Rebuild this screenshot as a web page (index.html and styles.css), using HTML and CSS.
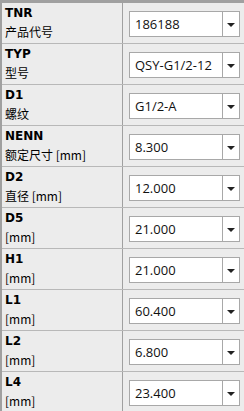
FILE: index.html
```html
<!DOCTYPE html>
<html lang="zh">
<head>
  <meta charset="UTF-8" />
  <meta name="viewport" content="width=device-width, initial-scale=1.0"/>
  <title>Parameter</title>
  <link rel="stylesheet" href="styles.css">
</head>
<body>
  <div class="table">
    <div class="row">
      <div class="label"><b>TNR</b><span>产品代号</span></div>
      <div class="value"><div class="combo"><span class="text">186188</span><span class="arrow"></span></div></div>
    </div>
    <div class="row">
      <div class="label"><b>TYP</b><span>型号</span></div>
      <div class="value"><div class="combo"><span class="text">QSY-G1/2-12</span><span class="arrow"></span></div></div>
    </div>
    <div class="row">
      <div class="label"><b>D1</b><span>螺纹</span></div>
      <div class="value"><div class="combo"><span class="text">G1/2-A</span><span class="arrow"></span></div></div>
    </div>
    <div class="row">
      <div class="label"><b>NENN</b><span>额定尺寸 [mm]</span></div>
      <div class="value"><div class="combo"><span class="text">8.300</span><span class="arrow"></span></div></div>
    </div>
    <div class="row">
      <div class="label"><b>D2</b><span>直径 [mm]</span></div>
      <div class="value"><div class="combo"><span class="text">12.000</span><span class="arrow"></span></div></div>
    </div>
    <div class="row">
      <div class="label"><b>D5</b><span>[mm]</span></div>
      <div class="value"><div class="combo"><span class="text">21.000</span><span class="arrow"></span></div></div>
    </div>
    <div class="row">
      <div class="label"><b>H1</b><span>[mm]</span></div>
      <div class="value"><div class="combo"><span class="text">21.000</span><span class="arrow"></span></div></div>
    </div>
    <div class="row">
      <div class="label"><b>L1</b><span>[mm]</span></div>
      <div class="value"><div class="combo"><span class="text">60.400</span><span class="arrow"></span></div></div>
    </div>
    <div class="row">
      <div class="label"><b>L2</b><span>[mm]</span></div>
      <div class="value"><div class="combo"><span class="text">6.800</span><span class="arrow"></span></div></div>
    </div>
    <div class="row">
      <div class="label"><b>L4</b><span>[mm]</span></div>
      <div class="value"><div class="combo"><span class="text">23.400</span><span class="arrow"></span></div></div>
    </div>
  </div>
</body>
</html>
```

FILE: styles.css
```css
body {
  margin: 0;
  overflow: hidden;
  background: #ececec;
  font-family: "Liberation Sans", "Noto Sans CJK SC", sans-serif;
}

.table {
  border-top: 3px solid #a0a0a0;
  border-left: 2px solid #a0a0a0;
}

.row {
  display: flex;
  height: 40px;
  border-bottom: 1px solid #b8b8b8;
}

.label {
  width: 117px;
  padding: 3px 0 0 3px;
  border-right: 1px solid #a0a0a0;
  display: flex;
  flex-direction: column;
  color: #000;
}

.label b {
  font-family: "DejaVu Sans", sans-serif;
  font-size: 12px;
  line-height: 15px;
  font-weight: bold;
}

.label span {
  font-family: "Noto Sans CJK SC", "DejaVu Sans", sans-serif;
  font-size: 12px;
  line-height: 20px;
  margin-top: 1px;
}

.value {
  flex: 1;
  padding: 8px 4px 0 6px;
}

.combo {
  display: flex;
  height: 24px;
  border: 1px solid #a8a8a8;
  background: #fff;
}

.text {
  flex: 1;
  padding-left: 5px;
  font-family: "Open Sans", sans-serif;
  font-size: 13px;
  line-height: 24px;
  color: #111;
}

.arrow {
  width: 16px;
  border-left: 1px solid #a8a8a8;
  position: relative;
}

.arrow::after {
  content: "";
  position: absolute;
  left: 4px;
  top: 11px;
  border-left: 4px solid transparent;
  border-right: 4px solid transparent;
  border-top: 4px solid #222;
}
```
